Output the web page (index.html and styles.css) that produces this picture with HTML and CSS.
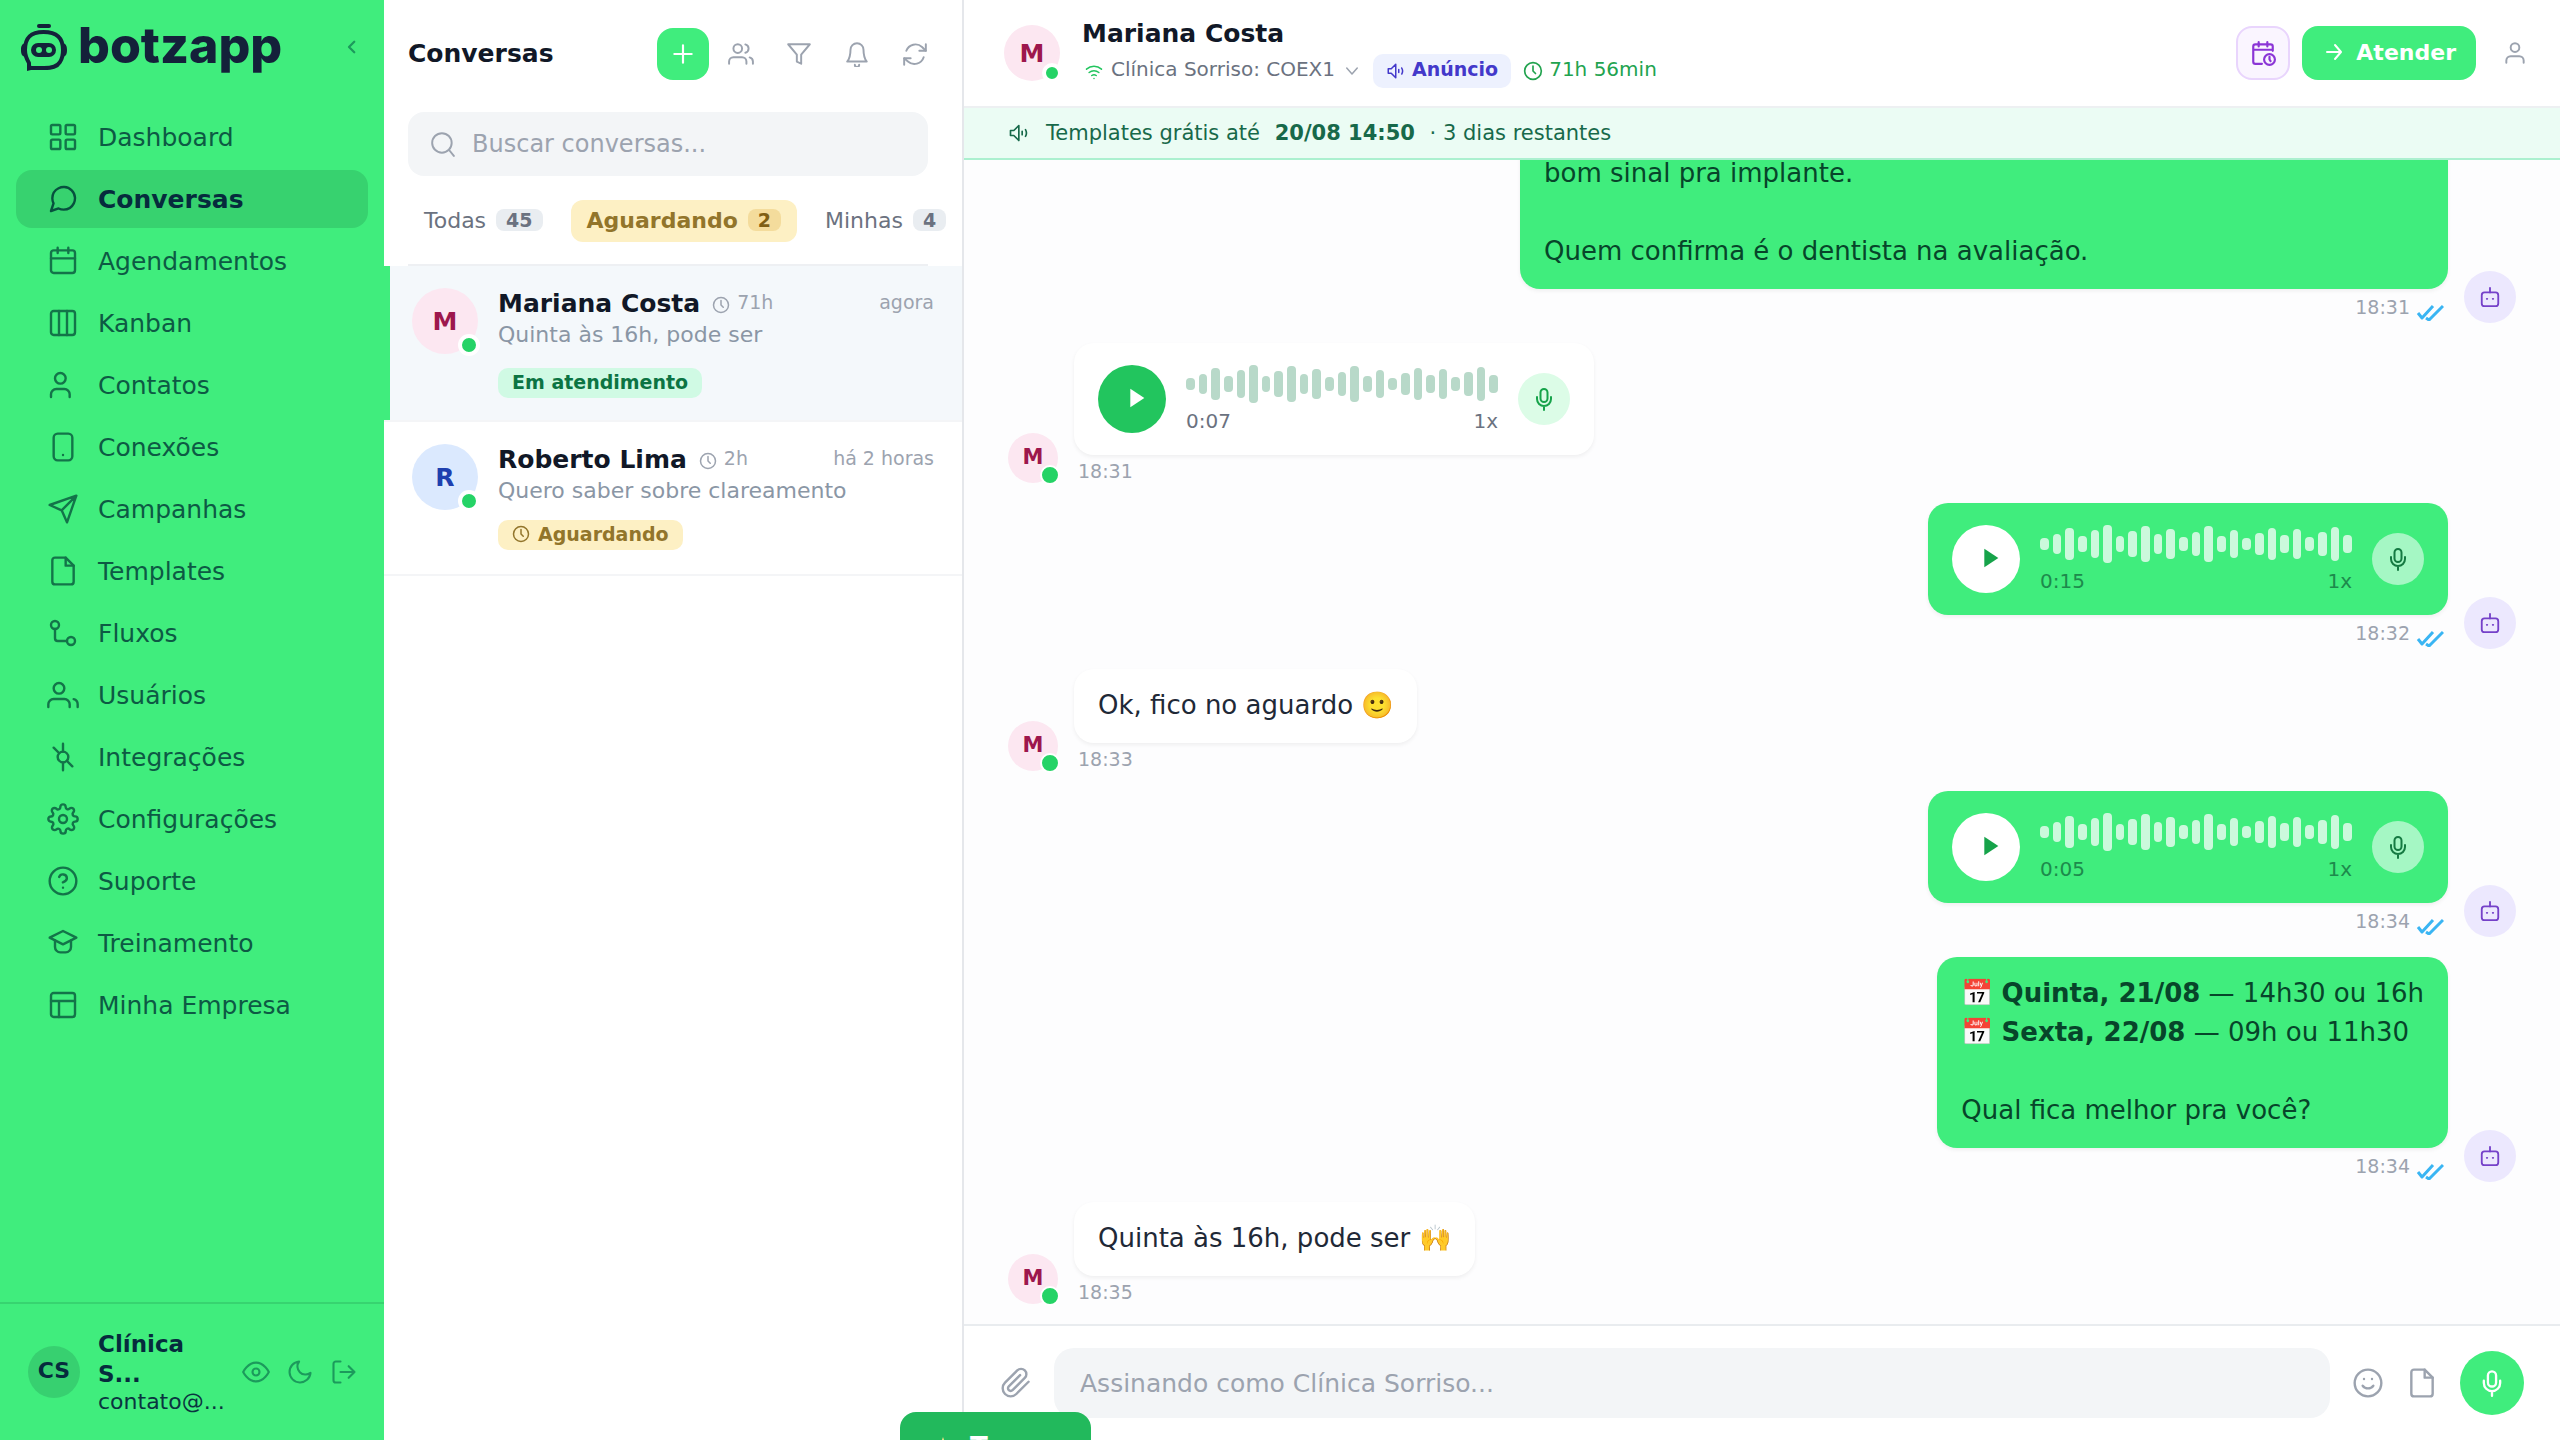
FILE: index.html
```html
<!DOCTYPE html>
<html lang="pt-BR">
<head>
    <meta charset="UTF-8">
    <meta name="viewport" content="width=device-width, initial-scale=1.0">
    <title>Botzapp - Conversas</title>
    <link rel="stylesheet" href="styles.css">
</head>
<body>
    <!-- Shared icons -->
    <svg class="sprite" aria-hidden="true">
        <symbol id="i-clock" viewBox="0 0 24 24"><circle cx="12" cy="12" r="10"/><path d="M12 6v6l3 3"/></symbol>
        <symbol id="i-user" viewBox="0 0 24 24"><path d="M20 21v-2a4 4 0 0 0-4-4H8a4 4 0 0 0-4 4v2"/><circle cx="12" cy="7" r="4"/></symbol>
        <symbol id="i-file" viewBox="0 0 24 24"><path d="M14 2H6a2 2 0 0 0-2 2v16a2 2 0 0 0 2 2h12a2 2 0 0 0 2-2V8z"/><path d="M14 2v6h6"/></symbol>
        <symbol id="i-mic" viewBox="0 0 24 24"><rect x="8.5" y="2" width="7" height="13" rx="3.5"/><path d="M19 10v2a7 7 0 0 1-14 0v-2M12 19v4"/></symbol>
        <symbol id="i-play" viewBox="0 0 24 24"><path d="M8 4l12 8-12 8z"/></symbol>
        <symbol id="i-volume" viewBox="0 0 24 24"><path d="M13 3L7 9H3v6h4l6 6z"/><path d="M17 10v4M21 8a8 8 0 0 1 0 8"/></symbol>
        <symbol id="i-bot" viewBox="0 0 24 24"><rect x="3" y="7" width="18" height="15" rx="3"/><path d="M12 2v5M8.5 14h.5M15 14h.5"/></symbol>
        <symbol id="i-ticks" viewBox="0 0 28 18"><path d="M2 10l4 5L17 3M10 15l3 2L27 3"/></symbol>
    </svg>

    <div class="app">
        <!-- Sidebar -->
        <aside class="sidebar">
            <div class="brand">
                <a class="logo" href="#">
                    <svg class="logo-mark" viewBox="0 0 48 50" aria-hidden="true">
                        <rect x="17" y="2" width="14" height="4" rx="2" fill="#14213a"/>
                        <path d="M9 41C6 36 5 32 5 28c0-12 5-18 18.500-18S43 16 43 28c0 5-1 9-3 12-3 5-8 6-16 6H9z" fill="none" stroke="#14213a" stroke-width="4" stroke-linejoin="round"/>
                        <path d="M5 21v14c-3-1-4-3-4-7s1-6 4-7zM43 21v14c3-1 4-3 4-7s-1-6-4-7z" fill="#14213a"/>
                        <path d="M7 40v9l8-2z" fill="#14213a"/>
                        <rect x="11" y="21" width="25" height="14" rx="7" fill="#14213a"/>
                        <circle cx="19" cy="28" r="3" fill="#40ed7d"/>
                        <circle cx="29" cy="28" r="3" fill="#40ed7d"/>
                    </svg>
                    <span class="logo-text">botzapp</span>
                </a>
                <button class="collapse" aria-label="Recolher menu">
                    <svg class="icon" viewBox="0 0 24 24"><path d="M15 5l-7 7 7 7"/></svg>
                </button>
            </div>

            <nav class="nav">
                <a class="nav-item" href="#"><svg class="icon" viewBox="0 0 24 24"><rect x="3" y="3" width="7" height="7" rx="1"/><rect x="14" y="3" width="7" height="7" rx="1"/><rect x="3" y="14" width="7" height="7" rx="1"/><rect x="14" y="14" width="7" height="7" rx="1"/></svg>Dashboard</a>
                <a class="nav-item active" href="#"><svg class="icon" viewBox="0 0 24 24"><path d="M21 11.500a8.380 8.380 0 0 1-.9 3.800 8.500 8.500 0 0 1-7.600 4.700 8.380 8.380 0 0 1-3.800-.9L3 21l1.900-5.700a8.380 8.380 0 0 1-.9-3.800 8.500 8.500 0 0 1 4.700-7.600 8.380 8.380 0 0 1 3.800-.9h.5a8.480 8.480 0 0 1 8 8v.5z"/></svg>Conversas</a>
                <a class="nav-item" href="#"><svg class="icon" viewBox="0 0 24 24"><rect x="3" y="4" width="18" height="17" rx="2"/><path d="M8 2v4M16 2v4M3 10h18"/></svg>Agendamentos</a>
                <a class="nav-item" href="#"><svg class="icon" viewBox="0 0 24 24"><rect x="3" y="3" width="18" height="18" rx="2"/><path d="M9 3v18M15 3v18"/></svg>Kanban</a>
                <a class="nav-item" href="#"><svg class="icon" viewBox="0 0 24 24"><path d="M17 21v-2a4 4 0 0 0-4-4H7a4 4 0 0 0-4 4v2"/><circle cx="10" cy="7" r="4"/></svg>Contatos</a>
                <a class="nav-item" href="#"><svg class="icon" viewBox="0 0 24 24"><rect x="5" y="2" width="14" height="20" rx="3"/><path d="M12 18h.01"/></svg>Conexões</a>
                <a class="nav-item" href="#"><svg class="icon" viewBox="0 0 24 24"><path d="M22 2L11 13M22 2l-7 20-4-9-9-4z"/></svg>Campanhas</a>
                <a class="nav-item" href="#"><svg class="icon"><use href="#i-file"/></svg>Templates</a>
                <a class="nav-item" href="#"><svg class="icon" viewBox="0 0 24 24"><circle cx="6" cy="6" r="3"/><circle cx="18" cy="18" r="3"/><path d="M6 9v7a2 2 0 0 0 2 2h7"/></svg>Fluxos</a>
                <a class="nav-item" href="#"><svg class="icon" viewBox="0 0 24 24"><path d="M17 21v-2a4 4 0 0 0-4-4H5a4 4 0 0 0-4 4v2"/><circle cx="9" cy="7" r="4"/><path d="M23 21v-2a4 4 0 0 0-3-3.870"/></svg>Usuários</a>
                <a class="nav-item" href="#"><svg class="icon" viewBox="0 0 24 24"><circle cx="12" cy="12" r="4"/><path d="M12 2v6M12 16v6M5 5l4 4M15 15l4 4"/></svg>Integrações</a>
                <a class="nav-item" href="#"><svg class="icon" viewBox="0 0 24 24"><circle cx="12" cy="12" r="3"/><path d="M19.400 15a1.650 1.650 0 0 0 .33 1.820l.06.06a2 2 0 0 1 0 2.830 2 2 0 0 1-2.830 0l-.06-.06a1.650 1.650 0 0 0-1.820-.33 1.650 1.650 0 0 0-1 1.510V21a2 2 0 0 1-2 2 2 2 0 0 1-2-2v-.09A1.650 1.650 0 0 0 9 19.400a1.650 1.650 0 0 0-1.820.33l-.06.06a2 2 0 0 1-2.830 0 2 2 0 0 1 0-2.830l.06-.06a1.650 1.650 0 0 0 .33-1.820 1.650 1.650 0 0 0-1.510-1H3a2 2 0 0 1-2-2 2 2 0 0 1 2-2h.09A1.650 1.650 0 0 0 4.600 9a1.650 1.650 0 0 0-.33-1.820l-.06-.06a2 2 0 0 1 0-2.830 2 2 0 0 1 2.830 0l.06.06a1.650 1.650 0 0 0 1.820.33H9a1.650 1.650 0 0 0 1-1.510V3a2 2 0 0 1 2-2 2 2 0 0 1 2 2v.09a1.650 1.650 0 0 0 1 1.510 1.650 1.650 0 0 0 1.820-.33l.06-.06a2 2 0 0 1 2.830 0 2 2 0 0 1 0 2.830l-.06.06a1.650 1.650 0 0 0-.33 1.820V9a1.650 1.650 0 0 0 1.510 1H21a2 2 0 0 1 2 2 2 2 0 0 1-2 2h-.09a1.650 1.650 0 0 0-1.510 1z"/></svg>Configurações</a>
                <a class="nav-item" href="#"><svg class="icon" viewBox="0 0 24 24"><circle cx="12" cy="12" r="10"/><path d="M9.100 9a3 3 0 0 1 5.800 1c0 2-3 3-3 3M12 17h.01"/></svg>Suporte</a>
                <a class="nav-item" href="#"><svg class="icon" viewBox="0 0 24 24"><path d="M12 3l10 5-10 5L2 8z"/><path d="M6 10v5a4 4 0 0 0 4 4h4a4 4 0 0 0 4-4v-5"/></svg>Treinamento</a>
                <a class="nav-item" href="#"><svg class="icon" viewBox="0 0 24 24"><rect x="3" y="3" width="18" height="18" rx="2"/><path d="M3 9h18M9 21V9"/></svg>Minha Empresa</a>
            </nav>

            <div class="account">
                <div class="account-avatar">CS</div>
                <div class="account-info">
                    <div class="account-name">Clínica S...</div>
                    <div class="account-email">contato@...</div>
                </div>
                <div class="account-actions">
                    <button aria-label="Visibilidade"><svg class="icon" viewBox="0 0 24 24"><path d="M1 12s4-8 11-8 11 8 11 8-4 8-11 8-11-8-11-8z"/><circle cx="12" cy="12" r="3"/></svg></button>
                    <button aria-label="Tema escuro"><svg class="icon" viewBox="0 0 24 24"><path d="M21 12.800A9 9 0 1 1 11.200 3 7 7 0 0 0 21 12.800z"/></svg></button>
                    <button aria-label="Sair"><svg class="icon" viewBox="0 0 24 24"><path d="M9 3H5a2 2 0 0 0-2 2v14a2 2 0 0 0 2 2h4M16 17l5-5-5-5M21 12H9"/></svg></button>
                </div>
            </div>
        </aside>

        <!-- Conversation list -->
        <section class="list-panel">
            <header class="list-header">
                <h1>Conversas</h1>
                <div class="list-actions">
                    <button class="btn-add" aria-label="Nova conversa"><svg class="icon" viewBox="0 0 24 24"><path d="M12 4v16M4 12h16"/></svg></button>
                    <button aria-label="Grupos"><svg class="icon" viewBox="0 0 24 24"><path d="M17 21v-2a4 4 0 0 0-4-4H5a4 4 0 0 0-4 4v2"/><circle cx="9" cy="7" r="4"/><path d="M23 21v-2a4 4 0 0 0-3-3.870M16 3.130a4 4 0 0 1 0 7.750"/></svg></button>
                    <button aria-label="Filtrar"><svg class="icon" viewBox="0 0 24 24"><path d="M22 3H2l8 9.500V19l4 2v-8.500z"/></svg></button>
                    <button aria-label="Notificações"><svg class="icon" viewBox="0 0 24 24"><path d="M18 8A6 6 0 0 0 6 8c0 7-3 11-3 11h18s-3-4-3-11M10 22a2 2 0 0 0 4 0"/></svg></button>
                    <button aria-label="Atualizar"><svg class="icon" viewBox="0 0 24 24"><path d="M22 3v6h-6M2 22v-6h6"/><path d="M4 9a9 9 0 0 1 14.500-3.500L22 9M2 16l3.500 3A9 9 0 0 0 20 15"/></svg></button>
                </div>
            </header>

            <div class="search">
                <svg class="icon" viewBox="0 0 24 24"><circle cx="11" cy="11" r="9"/><path d="M22 23l-4-5"/></svg>
                <input type="text" aria-label="Buscar conversas" placeholder="Buscar conversas...">
            </div>

            <div class="tabs">
                <button class="tab">Todas <span class="count">45</span></button>
                <button class="tab active">Aguardando <span class="count">2</span></button>
                <button class="tab">Minhas <span class="count">4</span></button>
            </div>

            <a class="chat-row active" href="#">
                <div class="avatar pink">M<span class="dot"></span></div>
                <div class="chat-body">
                    <div class="chat-top">
                        <span class="chat-name">Mariana Costa</span>
                        <span class="chat-window"><svg class="icon"><use href="#i-clock"/></svg>71h</span>
                        <span class="chat-time">agora</span>
                    </div>
                    <div class="chat-preview">Quinta às 16h, pode ser</div>
                    <span class="tag tag-green">Em atendimento</span>
                </div>
            </a>
            <a class="chat-row" href="#">
                <div class="avatar blue">R<span class="dot"></span></div>
                <div class="chat-body">
                    <div class="chat-top">
                        <span class="chat-name">Roberto Lima</span>
                        <span class="chat-window"><svg class="icon"><use href="#i-clock"/></svg>2h</span>
                        <span class="chat-time">há 2 horas</span>
                    </div>
                    <div class="chat-preview">Quero saber sobre clareamento</div>
                    <span class="tag tag-yellow"><svg class="icon"><use href="#i-clock"/></svg>Aguardando</span>
                </div>
            </a>
        </section>

        <!-- Open conversation -->
        <main class="chat">
            <header class="chat-header">
                <div class="avatar pink">M<span class="dot"></span></div>
                <div class="contact">
                    <h2>Mariana Costa</h2>
                    <div class="contact-sub">
                        <button class="channel">
                            <svg class="icon wifi" viewBox="0 0 24 24"><path d="M2 9.500a15 15 0 0 1 20 0M5.500 14a10 10 0 0 1 13 0M9 18a5 5 0 0 1 6 0M12 22h.01"/></svg>
                            <span>Clínica Sorriso: COEX1</span>
                            <svg class="icon chevron" viewBox="0 0 24 24"><path d="M5 8l7 8 7-8"/></svg>
                        </button>
                        <span class="ad"><svg class="icon"><use href="#i-volume"/></svg><span>Anúncio</span></span>
                        <span class="remaining"><svg class="icon"><use href="#i-clock"/></svg><span>71h 56min</span></span>
                    </div>
                </div>
                <div class="header-actions">
                    <button class="btn-schedule" aria-label="Agendar mensagem"><svg class="icon" viewBox="0 0 24 24"><path d="M21 10V6a2 2 0 0 0-2-2H5a2 2 0 0 0-2 2v14a2 2 0 0 0 2 2h6M8 2v4M16 2v4M3 9h18"/><circle cx="18" cy="18" r="5"/><path d="M18 15.500V18l1 1.500"/></svg></button>
                    <button class="btn-attend"><svg class="icon" viewBox="0 0 24 24"><path d="M5 12h14M13 5l6 7-6 7"/></svg>Atender</button>
                    <button class="btn-profile" aria-label="Perfil"><svg class="icon"><use href="#i-user"/></svg></button>
                </div>
            </header>

            <div class="banner">
                <svg class="icon"><use href="#i-volume"/></svg>
                <p>Templates grátis até <strong>20/08 14:50</strong> · 3 dias restantes</p>
            </div>

            <div class="messages">
                <div class="message out">
                    <div class="stack">
                        <div class="bubble long">bom sinal pra implante.<br><br>Quem confirma é o dentista na avaliação.</div>
                        <div class="meta">18:31<svg class="icon"><use href="#i-ticks"/></svg></div>
                    </div>
                    <div class="bot"><svg class="icon"><use href="#i-bot"/></svg></div>
                </div>

                <div class="message in">
                    <div class="avatar pink">M<span class="dot"></span></div>
                    <div class="stack">
                        <div class="bubble audio">
                            <button class="play" aria-label="Reproduzir"><svg><use href="#i-play"/></svg></button>
                            <div class="track">
                                <div class="wave"></div>
                                <div class="track-info"><span>0:07</span><button class="speed">1x</button></div>
                            </div>
                            <div class="mic"><svg class="icon"><use href="#i-mic"/></svg></div>
                        </div>
                        <div class="meta">18:31</div>
                    </div>
                </div>

                <div class="message out">
                    <div class="stack">
                        <div class="bubble audio">
                            <button class="play" aria-label="Reproduzir"><svg><use href="#i-play"/></svg></button>
                            <div class="track">
                                <div class="wave"></div>
                                <div class="track-info"><span>0:15</span><button class="speed">1x</button></div>
                            </div>
                            <div class="mic"><svg class="icon"><use href="#i-mic"/></svg></div>
                        </div>
                        <div class="meta">18:32<svg class="icon"><use href="#i-ticks"/></svg></div>
                    </div>
                    <div class="bot"><svg class="icon"><use href="#i-bot"/></svg></div>
                </div>

                <div class="message in">
                    <div class="avatar pink">M<span class="dot"></span></div>
                    <div class="stack">
                        <div class="bubble">Ok, fico no aguardo 🙂</div>
                        <div class="meta">18:33</div>
                    </div>
                </div>

                <div class="message out">
                    <div class="stack">
                        <div class="bubble audio">
                            <button class="play" aria-label="Reproduzir"><svg><use href="#i-play"/></svg></button>
                            <div class="track">
                                <div class="wave"></div>
                                <div class="track-info"><span>0:05</span><button class="speed">1x</button></div>
                            </div>
                            <div class="mic"><svg class="icon"><use href="#i-mic"/></svg></div>
                        </div>
                        <div class="meta">18:34<svg class="icon"><use href="#i-ticks"/></svg></div>
                    </div>
                    <div class="bot"><svg class="icon"><use href="#i-bot"/></svg></div>
                </div>

                <div class="message out">
                    <div class="stack">
                        <div class="bubble">📅 <strong>Quinta, 21/08</strong> — 14h30 ou 16h<br>📅 <strong>Sexta, 22/08</strong> — 09h ou 11h30<br><br>Qual fica melhor pra você?</div>
                        <div class="meta">18:34<svg class="icon"><use href="#i-ticks"/></svg></div>
                    </div>
                    <div class="bot"><svg class="icon"><use href="#i-bot"/></svg></div>
                </div>

                <div class="message in">
                    <div class="avatar pink">M<span class="dot"></span></div>
                    <div class="stack">
                        <div class="bubble">Quinta às 16h, pode ser 🙌</div>
                        <div class="meta">18:35</div>
                    </div>
                </div>
            </div>

            <form class="composer">
                <button type="button" aria-label="Anexar arquivo"><svg class="icon" viewBox="0 0 24 24"><path d="M21.440 11.050l-9.190 9.190a6 6 0 0 1-8.490-8.490l9.190-9.190a4 4 0 0 1 5.660 5.660l-9.200 9.190a2 2 0 0 1-2.830-2.830l8.490-8.480"/></svg></button>
                <input type="text" aria-label="Mensagem" placeholder="Assinando como Clínica Sorriso...">
                <button type="button" aria-label="Emoji"><svg class="icon" viewBox="0 0 24 24"><circle cx="12" cy="12" r="10"/><path d="M8 14s1.500 2 4 2 4-2 4-2M9 9h.01M15 9h.01"/></svg></button>
                <button type="button" aria-label="Templates"><svg class="icon"><use href="#i-file"/></svg></button>
                <button type="button" class="record" aria-label="Gravar áudio"><svg class="icon"><use href="#i-mic"/></svg></button>
            </form>
        </main>
    </div>

    <button class="toast"><svg viewBox="0 0 24 24" aria-hidden="true"><path d="M12 4l2 6 6 2-6 2-2 6-2-6-6-2 6-2z"/></svg>Trocar</button>

    <script>
        const levels = [12, 20, 32, 16, 28, 38, 16, 26, 36, 20, 30, 14, 24, 36, 16, 28, 12, 22, 32, 18, 30, 14, 24, 34, 18];

        document.querySelectorAll('.wave').forEach(wave => {
            levels.forEach(level => {
                const bar = document.createElement('span');
                bar.style.height = `${level}px`;
                wave.appendChild(bar);
            });
        });
    </script>
</body>
</html>
```
FILE: styles.css
```css
:root {
    --green: #40ed7d;
    --green-dark: #22c55e;
    --ink: #111827;
    --gray: #6b7280;
    --gray-light: #9ca3af;
    --field: #f3f5f7;
    --line: #e5e7eb;
}

*, *::before, *::after {
    box-sizing: border-box;
    margin: 0;
    padding: 0;
}

body {
    font-family: "DejaVu Sans", sans-serif;
    font-size: 22px;
    color: var(--ink);
    background: #fff;
    overflow: hidden;
}

a {
    color: inherit;
    text-decoration: none;
}

button, input {
    font: inherit;
    color: inherit;
    border: none;
    background: none;
}

button {
    display: flex;
    align-items: center;
    justify-content: center;
    cursor: pointer;
}

.sprite {
    position: absolute;
    width: 0;
    height: 0;
}

.icon {
    display: block;
    flex: none;
    width: 28px;
    height: 28px;
    fill: none;
    stroke: currentColor;
    stroke-width: 1.8;
    stroke-linecap: round;
    stroke-linejoin: round;
}

.app {
    display: flex;
    height: 100vh;
}

/* Sidebar */
.sidebar {
    flex: none;
    display: flex;
    flex-direction: column;
    width: 384px;
    background: var(--green);
}

.brand {
    display: flex;
    align-items: center;
    justify-content: space-between;
    height: 108px;
    padding: 0 20px 14px;
}

.logo {
    display: flex;
    align-items: flex-start;
    gap: 10px;
}

.logo-mark {
    width: 48px;
    height: 50px;
}

.logo-text {
    font-family: Inter, sans-serif;
    font-size: 50px;
    font-weight: 800;
    line-height: 46px;
    color: #14213a;
}

.collapse {
    width: 24px;
    height: 24px;
    color: #1c9a5c;
}

.collapse .icon {
    width: 18px;
    height: 18px;
    stroke-width: 3;
}

.nav {
    flex: 1;
    display: flex;
    flex-direction: column;
    gap: 4px;
    padding: 0 16px;
}

.nav-item {
    display: flex;
    align-items: center;
    gap: 19px;
    height: 58px;
    padding: 0 31px;
    border-radius: 16px;
    font-size: 25px;
    color: #0d5a44;
}

.nav-item .icon {
    width: 32px;
    height: 32px;
    color: #137449;
}

.nav-item.active {
    background: #37d26f;
    color: #062b3d;
    font-weight: bold;
}

.nav-item.active .icon {
    color: #07503e;
}

.account {
    display: flex;
    align-items: center;
    gap: 18px;
    height: 138px;
    padding: 0 26px 0 28px;
    border-top: 2px solid #37d470;
    color: #0a3440;
}

.account-avatar {
    flex: none;
    width: 52px;
    height: 52px;
    border-radius: 50%;
    background: #37d070;
    font-weight: bold;
    line-height: 50px;
    text-align: center;
    color: #062b3d;
}

.account-info {
    flex: 1;
    min-width: 0;
}

.account-name {
    font-size: 23px;
    font-weight: bold;
    line-height: 30px;
    color: #062b3d;
}

.account-email {
    line-height: 26px;
    white-space: nowrap;
}

.account-actions {
    display: flex;
    gap: 16px;
    color: #1c9a5c;
}

/* Conversation list */
.list-panel {
    flex: none;
    width: 580px;
    border-right: 2px solid var(--line);
    background: #fff;
    overflow: hidden;
}

.list-header {
    display: flex;
    align-items: center;
    justify-content: space-between;
    padding: 28px 21px 0 24px;
}

.list-header h1 {
    font-size: 25px;
    line-height: 50px;
}

.list-actions {
    display: flex;
    gap: 6px;
    color: var(--gray-light);
}

.list-actions button {
    width: 52px;
    height: 52px;
    border-radius: 16px;
}

.list-actions .icon {
    width: 26px;
    height: 26px;
}

.list-actions .btn-add {
    background: var(--green);
    color: #fff;
}

.btn-add .icon {
    stroke-width: 2;
}

.search {
    display: flex;
    align-items: center;
    gap: 16px;
    height: 64px;
    margin: 32px 34px 0 24px;
    padding: 0 22px;
    border-radius: 16px;
    background: var(--field);
    color: var(--gray-light);
}

.search .icon {
    width: 26px;
    height: 26px;
}

.search input {
    flex: 1;
    min-width: 0;
    font-size: 24px;
}

input::placeholder {
    color: var(--gray-light);
    opacity: 1;
}

input:focus {
    outline: none;
}

.tabs {
    display: flex;
    gap: 12px;
    height: 90px;
    margin: 0 34px 0 24px;
    padding: 24px 0;
    border-bottom: 2px solid #eef0f3;
}

.tab {
    flex: none;
    gap: 10px;
    height: 42px;
    padding: 0 16px 2px;
    border-radius: 12px;
    font-size: 22px;
    color: var(--gray);
}

.tab.active {
    background: #fdf0c4;
    color: #92752b;
    font-weight: bold;
}

.count {
    padding: 0 10px;
    border-radius: 8px;
    background: #e9edf1;
    font-size: 19px;
    font-weight: bold;
    line-height: 22px;
}

.tab.active .count {
    background: #f4dc9c;
    color: #7f5f14;
}

.chat-row {
    display: flex;
    gap: 20px;
    min-height: 154px;
    padding: 22px 28px;
    border-bottom: 2px solid #f4f5f7;
}

.chat-row.active {
    min-height: 156px;
    background: #f4f8fb;
    box-shadow: inset 6px 0 0 var(--green);
}

.avatar {
    position: relative;
    flex: none;
    display: flex;
    align-items: center;
    justify-content: center;
    width: 66px;
    height: 66px;
    border-radius: 50%;
    font-size: 25px;
    font-weight: bold;
}

.avatar.pink {
    background: #fce7f1;
    color: #9d174d;
}

.avatar.blue {
    background: #dbe9fe;
    color: #1e40af;
}

.dot {
    position: absolute;
    right: -2px;
    bottom: -2px;
    width: 22px;
    height: 22px;
    border: 4px solid #fff;
    border-radius: 50%;
    background: #25d366;
}

.chat-body {
    flex: 1;
    min-width: 0;
}

.chat-top {
    display: flex;
    gap: 12px;
    height: 30px;
}

.chat-name {
    font-size: 25px;
    font-weight: bold;
    line-height: 32px;
}

.chat-window, .chat-time {
    display: flex;
    gap: 7px;
    font-size: 19px;
    line-height: 28px;
    color: var(--gray-light);
}

.chat-window .icon {
    width: 18px;
    height: 18px;
    margin-top: 8px;
    stroke-width: 2;
}

.chat-time {
    margin-left: auto;
}

.chat-preview {
    margin-top: 2px;
    line-height: 30px;
    color: #8a96a5;
}

.tag {
    display: inline-flex;
    align-items: center;
    gap: 8px;
    height: 30px;
    margin-top: 14px;
    padding: 0 14px 2px;
    border-radius: 10px;
    font-size: 19px;
    font-weight: bold;
    line-height: 26px;
}

.chat-row.active .tag {
    margin-top: 18px;
}

.tag .icon {
    width: 18px;
    height: 18px;
    stroke-width: 2;
}

.tag-green {
    background: #d0fae4;
    color: #0c7443;
}

.tag-yellow {
    background: #fdf0c4;
    color: #92752b;
}

/* Chat */
.chat {
    flex: 1;
    min-width: 0;
    display: flex;
    flex-direction: column;
    background: #fdfdfe;
}

.chat-header {
    flex: none;
    display: flex;
    align-items: center;
    gap: 22px;
    height: 108px;
    padding: 0 18px 0 40px;
    border-bottom: 2px solid #edf0f2;
    background: #fff;
}

.chat-header .avatar {
    width: 56px;
    height: 56px;
}

.chat-header .dot {
    width: 20px;
    height: 20px;
}

.contact {
    flex: 1;
    min-width: 0;
}

.contact h2 {
    font-size: 25px;
    line-height: 32px;
}

.contact-sub {
    display: flex;
    align-items: center;
    gap: 12px;
    height: 34px;
    margin-top: 4px;
    font-size: 20px;
    line-height: 30px;
    white-space: nowrap;
}

.contact-sub span span, .channel span {
    padding-bottom: 4px;
}

.contact-sub .icon {
    width: 18px;
    height: 18px;
    stroke-width: 2;
}

.channel {
    gap: 8px;
    padding-left: 3px;
    color: var(--gray);
}

.channel .wifi {
    color: var(--green-dark);
}

.channel .chevron {
    color: var(--gray-light);
}

.ad, .remaining {
    display: flex;
    align-items: center;
    gap: 8px;
}

.ad {
    height: 34px;
    padding: 0 13px;
    border-radius: 10px;
    background: #edf1fe;
    font-size: 19px;
    font-weight: bold;
    color: #4338ca;
}

.remaining {
    gap: 6px;
    color: #22a34f;
}

.remaining .icon {
    width: 20px;
    height: 20px;
}

.header-actions {
    display: flex;
    gap: 12px;
}

.header-actions button {
    height: 54px;
    border-radius: 16px;
}

.btn-schedule {
    width: 54px;
    border: 2px solid #e9d5fd;
    background: #faf5ff;
    color: #8b35d6;
}

.btn-schedule .icon {
    width: 26px;
    height: 26px;
    stroke-width: 2;
}

.btn-attend {
    gap: 10px;
    padding: 0 20px 2px;
    background: var(--green);
    font-weight: bold;
    color: #fff;
}

.btn-attend .icon {
    width: 24px;
    height: 24px;
    stroke-width: 2;
}

.btn-profile {
    width: 54px;
    color: var(--gray-light);
}

.btn-profile .icon {
    width: 26px;
    height: 26px;
}

.banner {
    flex: none;
    display: flex;
    align-items: center;
    gap: 18px;
    height: 52px;
    padding: 0 44px;
    border-bottom: 2px solid #abf0cf;
    background: #ebfcf4;
    font-size: 21px;
    color: #17694a;
}

.banner .icon {
    width: 20px;
    height: 20px;
    stroke-width: 2;
}

.banner strong {
    margin: 0 8px;
}

.messages {
    flex: 1;
    min-height: 0;
    display: flex;
    flex-direction: column;
    justify-content: flex-end;
    gap: 20px;
    padding: 0 44px 20px;
    overflow: hidden;
}

.message {
    flex: none;
    display: flex;
    align-items: flex-end;
    gap: 16px;
}

.message.out {
    justify-content: flex-end;
}

.message .avatar {
    width: 50px;
    height: 50px;
    padding-bottom: 3px;
    font-size: 21px;
}

.message .dot {
    width: 20px;
    height: 20px;
    border-width: 2px;
}

.bubble {
    padding: 17px 24px 18px;
    border-radius: 20px;
    background: #fff;
    box-shadow: 0 2px 4px rgba(0, 0, 0, 0.06);
    font-size: 26px;
    line-height: 39px;
    color: #1f2937;
}

.out .bubble {
    background: var(--green);
    color: #07452a;
}

.bubble.long {
    width: 928px;
    max-width: 100%;
}

.bubble.audio {
    display: flex;
    align-items: center;
    gap: 20px;
    width: 520px;
    padding: 22px 24px;
}

.play {
    flex: none;
    width: 68px;
    height: 68px;
    padding: 0 0 2px 5px;
    border-radius: 50%;
    background: var(--green-dark);
    color: #fff;
}

.play svg {
    width: 28px;
    height: 28px;
    fill: currentColor;
}

.out .play {
    background: #fff;
    color: #16a34a;
}

.track {
    flex: 1;
    min-width: 0;
}

.wave {
    display: flex;
    align-items: center;
    gap: 4px;
    height: 40px;
}

.wave span {
    flex: 1;
    border-radius: 4px;
    background: #b8d9c9;
}

.out .wave span {
    background: #cbf9dc;
}

.track-info {
    display: flex;
    justify-content: space-between;
    margin-top: 4px;
    font-size: 20px;
    line-height: 26px;
    color: var(--gray);
}

.out .track-info {
    color: #1d8a4c;
}

.mic {
    flex: none;
    display: flex;
    align-items: center;
    justify-content: center;
    width: 52px;
    height: 52px;
    border-radius: 50%;
    background: #dcfce7;
    color: #16a34a;
}

.out .mic {
    background: #a5f7c4;
    color: #157a42;
}

.bubble.audio {
    height: 112px;
}

.mic .icon {
    width: 24px;
    height: 24px;
    stroke-width: 2;
}

.meta {
    display: flex;
    margin-top: 4px;
    padding: 0 4px;
    font-size: 19px;
    line-height: 24px;
    color: var(--gray-light);
}

.out .meta {
    align-items: flex-end;
    justify-content: flex-end;
    gap: 6px;
    height: 30px;
    padding-bottom: 2px;
    line-height: 28px;
}

.meta .icon {
    width: 28px;
    height: 18px;
    stroke: #3ab5f3;
    stroke-width: 3;
    stroke-linecap: butt;
}

.bot {
    flex: none;
    display: flex;
    align-items: center;
    justify-content: center;
    width: 52px;
    height: 52px;
    border-radius: 50%;
    background: #ece8fe;
    color: #7541c9;
}

.bot .icon {
    width: 22px;
    height: 22px;
    stroke-width: 2;
}

.composer {
    flex: none;
    display: flex;
    align-items: center;
    gap: 22px;
    padding: 22px 36px;
    border-top: 2px solid #e9ecef;
    background: #fff;
    color: var(--gray-light);
}

.composer .icon {
    width: 32px;
    height: 32px;
}

.composer input {
    flex: 1;
    min-width: 0;
    height: 70px;
    padding: 0 26px;
    border-radius: 20px;
    background: var(--field);
    font-size: 25px;
}

.composer .record {
    width: 64px;
    height: 64px;
    border-radius: 50%;
    background: var(--green);
    color: #fff;
}

.record .icon {
    width: 28px;
    height: 28px;
    stroke-width: 2;
}

/* Floating button peeking over the bottom edge */
.toast {
    position: fixed;
    left: 900px;
    bottom: -38px;
    gap: 12px;
    height: 66px;
    padding: 4px 30px 0 28px;
    border-radius: 16px;
    background: #22b95c;
    font-size: 26px;
    font-weight: bold;
    color: #fff;
}

.toast svg {
    width: 30px;
    height: 30px;
    fill: #fde68a;
}
```
